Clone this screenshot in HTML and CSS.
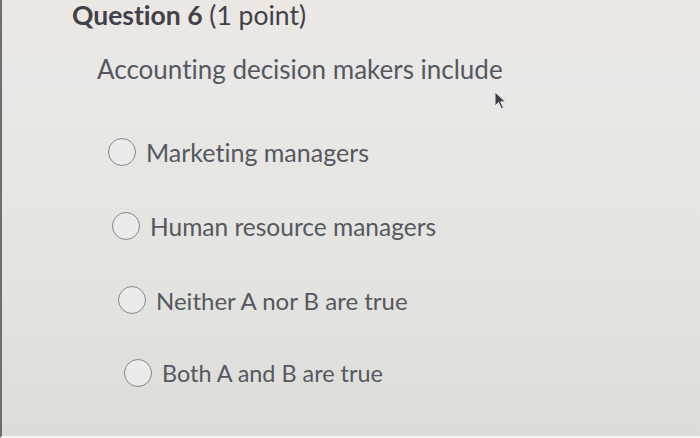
FILE: index.html
```html
<!DOCTYPE html>
<html>
<head>
<meta charset="utf-8">
<link rel="stylesheet" href="styles.css">
</head>
<body>
<div class="screen">
  <h1 class="title"><span class="strong">Question 6</span> (1 point)</h1>
  <p class="prompt">Accounting decision makers include</p>
  <svg class="cursor" width="14" height="20" viewBox="0 0 14 20"><path d="M1 1 L1 15 L4.5 11.5 L7.5 18 L9.5 17 L6.7 10.8 L11.5 10.8 Z" fill="#3d3f47" stroke="#e8e8e6" stroke-width="1"/></svg>
  <ul class="options">
    <li class="option o1"><span class="radio"></span><span class="label">Marketing managers</span></li>
    <li class="option o2"><span class="radio"></span><span class="label">Human resource managers</span></li>
    <li class="option o3"><span class="radio"></span><span class="label">Neither A nor B are true</span></li>
    <li class="option o4"><span class="radio"></span><span class="label">Both A and B are true</span></li>
  </ul>
</div>
</body>
</html>
```
FILE: styles.css
```css
html, body {
  margin: 0;
  padding: 0;
}
body {
  width: 700px;
  height: 438px;
  overflow: hidden;
  font-family: Lato, "Open Sans", sans-serif;
  font-variant-ligatures: none;
}
.screen {
  position: relative;
  box-sizing: border-box;
  width: 700px;
  height: 438px;
  border-left: 2px solid #6e6e6e;
  border-bottom: 2px solid #f4f4f2;
  background: linear-gradient(180deg, #ece7e3 0%, #e9e8e6 18%, #e6e6e3 40%, #e2e2df 70%, #dcdcd9 100%);
  padding: 0 0 0 70px;
}
.title {
  margin: 0;
  font-size: 26.5px;
  line-height: 30px;
  font-weight: 400;
  color: #414149;
  height: 34px;
}
.strong {
  font-weight: 700;
}
.prompt {
  margin: 18px 0 0 25px;
  font-size: 26px;
  line-height: 34px;
  color: #555861;
}
.cursor {
  position: absolute;
  left: 492px;
  top: 91px;
}
.options {
  list-style: none;
  margin: 51px 0 0 0;
  padding: 0;
}
.option {
  display: flex;
  align-items: center;
  gap: 10px;
  height: 30px;
  margin-bottom: 44px;
}
.o1 { padding-left: 36px; }
.o2 { padding-left: 40px; margin-top: 3px; }
.o3 { padding-left: 46px; margin-top: 0; }
.o4 { padding-left: 52px; margin-top: -1px; }
.radio {
  box-sizing: border-box;
  width: 28px;
  height: 28px;
  border: 1.6px solid #85878c;
  border-radius: 50%;
  background: #ebebe9;
  flex: none;
}
.label {
  font-size: 24.5px;
  color: #55585f;
}
.o1 .label { font-size: 25px; }
.o3 .label { font-size: 24px; }
.o4 .label { font-size: 23.4px; }
```
